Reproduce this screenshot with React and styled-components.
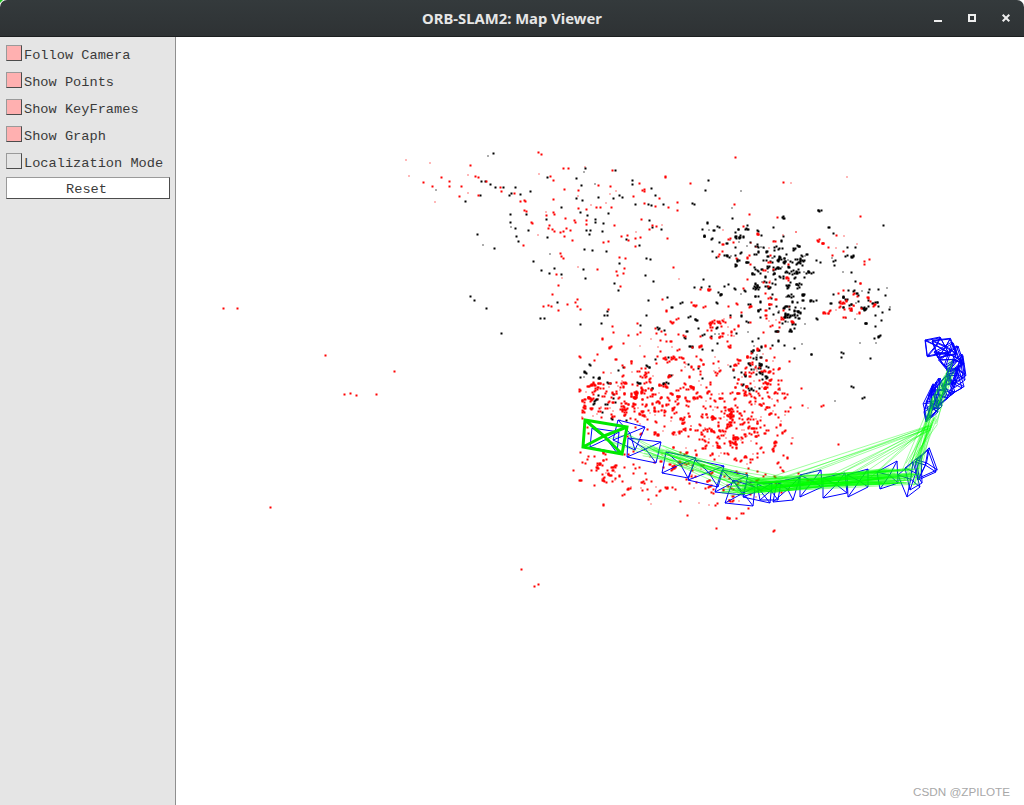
import React from "react";
import styled, { createGlobalStyle } from "styled-components";

const Global = createGlobalStyle`
  html, body { margin: 0; padding: 0; background: #fff; }
  #root { width: 1024px; height: 805px; overflow: hidden; }
`;

const Window = styled.div`
  position: relative;
  width: 1024px;
  height: 805px;
  display: flex;
  flex-direction: column;
  background: #fff;
  &::before {
    content: "";
    position: absolute;
    left: 0;
    top: 0;
    border-top: 3px solid #22c522;
    border-right: 3px solid transparent;
  }
`;

const TitleBar = styled.header`
  position: relative;
  z-index: 1;
  flex: 0 0 37px;
  box-sizing: border-box;
  display: flex;
  align-items: center;
  justify-content: center;
  background: linear-gradient(#343a3c, #2e3234);
  border-bottom: 1px solid #1c1f20;
  border-radius: 7px 7px 0 0;
`;

const Title = styled.h1`
  margin: 0;
  font: 700 14.8px "Noto Sans", "Open Sans", sans-serif;
  color: #e6e6e6;
`;

const WindowButtons = styled.div`
  position: absolute;
  right: 9px;
  top: 10px;
  display: flex;
  gap: 17px;
`;

const WinIcon = styled.svg`
  display: block;
  width: 17px;
  height: 17px;
  fill: none;
  stroke: #eeeeee;
  stroke-width: 2;
`;

const Body = styled.main`
  flex: 1;
  display: flex;
  min-height: 0;
`;

const Panel = styled.aside`
  flex: 0 0 176px;
  box-sizing: border-box;
  padding: 8px 5px 0 6px;
  background: #e5e5e5;
  border-right: 1px solid #8f8f8f;
  font: 13.65px "Liberation Mono", monospace;
  color: #3a3a3a;
`;

const Row = styled.label`
  display: flex;
  align-items: flex-start;
  gap: 2px;
  height: 24px;
  margin-bottom: 3px;
  line-height: 21px;
  white-space: nowrap;
  &:nth-child(5) { margin-bottom: 0; }
`;

const Box = styled.span`
  flex: 0 0 16px;
  box-sizing: border-box;
  height: 16px;
  background: ${(p) => (p.$on ? "#ffb0b0" : "#e5e5e5")};
  border: 1px solid #858585;
  border-top-color: #9a9a9a;
  border-left-color: #9a9a9a;
  border-bottom-color: #4c4c4c;
  border-right-color: #4c4c4c;
`;

const ResetButton = styled.div`
  box-sizing: border-box;
  width: 164px;
  height: 22px;
  padding-right: 3px;
  background: #fff;
  border: 1px solid #9a9a9a;
  border-bottom-color: #4c4c4c;
  border-right-color: #4c4c4c;
  line-height: 23px;
  text-align: center;
`;

const MapCanvas = styled.svg`
  flex: 1;
  display: block;
  width: 848px;
  height: 768px;
`;

const Watermark = styled.div`
  position: absolute;
  right: 14px;
  bottom: 7px;
  font: 11.7px "Liberation Sans", Arial, sans-serif;
  color: #a8a8a8;
`;

const rows = [
  ["Follow Camera", true],
  ["Show Points", true],
  ["Show KeyFrames", true],
  ["Show Graph", true],
  ["Localization Mode", false],
];

const seed = (s) => () => {
  s |= 0; s = (s + 0x6d2b79f5) | 0;
  let t = Math.imul(s ^ (s >>> 15), 1 | s);
  t = (t + Math.imul(t ^ (t >>> 7), 61 | t)) ^ t;
  return ((t ^ (t >>> 14)) >>> 0) / 4294967296;
};

const z = (o, v) => o + Math.floor(v / 3);
const pairs = (ox, oy, s) => s.trim().split(/\s+/).map((p) => {
  const [a, b] = p.split(",").map(Number);
  return [z(ox, a), z(oy, b)];
});

const paleZ = pairs(380, 140, "75,58 148,67 85,107 262,102 262,156 162,184 476,101 612,80 592,167 688,159 706,151 631,192 676,187 496,215 472,282 766,273 844,252 592,380 545,411 896,414");
const grayZ = pairs(380, 140, "322,46 166,148 392,260 307,314 508,341 643,130 610,93");
const redZ = pairs(380, 140, "475,37 485,43 271,76 184,113 130,127 157,139 209,124 209,139 244,139 238,169 286,109 295,113 319,125 362,142 364,155 296,167 403,161 420,183 432,181 437,183 511,109 520,120 550,85 565,85 553,148 520,178 595,151 656,136 691,139 698,91 778,130 793,148 760,169 793,189 826,199 838,175 892,187 865,202 892,211 433,211 439,214 500,226 519,217 523,223 556,235 583,241 586,247 620,241 620,253 453,246 456,249 508,256 505,265 517,268 523,274 540,277 550,274 559,265 570,271 553,289 577,301 595,205 618,207 649,202 661,202 694,202 703,256 670,306 685,304 724,290 742,286 745,301 767,295 781,292 766,319 861,295 808,268 817,256 829,259 784,238 431,317 541,340 544,350 549,356 717,352 736,355 880,382 732,384 730,400 708,393 711,405 651,389 528,402 536,436 518,463 720,438 847,478 563,492 491,498 505,495 514,499 592,478 587,488 593,499 600,508 535,511 684,507 698,560 700,577 772,583 781,577 829,580 844,574 856,583 826,565 895,535 773,549");
const blackZ = pairs(380, 140, "340,40 305,125 316,125 331,133 347,142 370,142 406,142 393,159 387,166 421,163 451,154 256,184 300,165 391,223 391,247 406,265 445,271 292,283 409,290 415,304 343,325 460,364 484,391 523,385 508,400 544,403 610,388 616,415 502,292 500,237 439,223 545,202 502,112 589,115 604,136 616,85 589,175 607,181 601,217 622,226 646,238 646,247 670,250 619,271 632,271 628,283 667,274 613,328 637,331 679,334 718,370 703,430 715,451 796,406 820,423 805,480 799,526 271,468 283,481 319,505 365,579 532,486 481,535 493,535 601,553 664,549 673,525 682,525 682,513 780,555 835,568 853,571 808,241 817,262 843,268 739,298 778,316 800,355 810,358 706,91 757,121 757,132 814,145 826,166 850,193 814,196 805,193 766,193 727,171 718,166 700,175 685,220 655,172");
const outliers = [[223,308],[237,308],[325,355],[394,371],[344,394],[350,393],[356,395],[376,394],[270,507],[521,569],[534,586],[538,584],[716,528],[582,462],[573,470]];

const blackClusters = [
  [772,268,20,14,70],[788,272,12,12,35],[790,312,11,10,40],[730,238,16,11,40],[866,304,16,10,40],
  [755,378,9,12,28],[718,328,22,26,30],[760,300,40,35,30],[820,350,25,25,12],[860,345,15,20,10],
  [640,372,40,15,18],[600,395,15,15,14],[750,355,15,10,14],[815,228,30,15,10],[745,190,40,15,6],
  [850,262,15,8,8],
];
const redClusters = [
  [755,380,12,16,70],[725,325,9,7,25],[775,316,10,8,14],[845,307,13,7,22],[870,300,15,15,10],
  [725,405,40,26,100],[612,393,22,14,85],[640,408,20,13,60],[730,428,18,13,100],[680,400,36,26,90],
  [598,470,16,8,25],[625,478,26,17,38],[700,480,22,15,26],[690,462,28,20,22],[745,478,30,20,45],
  [762,440,30,25,38],[782,400,20,22,20],[690,350,28,25,38],[650,355,26,14,30],[790,240,50,25,20],
  [835,245,30,15,10],[745,265,28,30,30],[775,185,60,30,7],[590,398,8,18,18],
];

function buildClusterPoints() {
  const r = seed(4242);
  const g = () => (r() + r() + r() + r() - 2) * 1.7;
  const out = [];
  const run = (list, colour) => list.forEach(([cx, cy, sx, sy, n]) => {
    for (let i = 0; i < n; i++) {
      const x = Math.round(cx + g() * sx);
      const y = Math.round(cy + g() * sy);
      if (y > 530 || x > 890 || x < 560) continue;
      if (y < 425 && x < 578) continue;
      const pale = r() < 0.15;
      out.push([x, y, colour, pale]);
      if (!pale && r() < 0.4) {
        const k = r() < 0.35 ? 3 : 1;
        for (let j = 1; j <= k; j++) {
          out.push([x + Math.floor(r() * 4) - 1, y + Math.floor(r() * 3) - 1, colour, false]);
        }
      }
    }
  });
  run(blackClusters, "#000");
  run(redClusters, "#f00");
  return out;
}

const allPoints = [
  ...paleZ.map(([x, y]) => [x, y, "#f00", true]),
  ...grayZ.map(([x, y]) => [x, y, "#000", true]),
  ...blackZ.map(([x, y]) => [x, y, "#000", false]),
  ...redZ.map(([x, y]) => [x, y, "#f00", false]),
  ...outliers.map(([x, y]) => [x, y, "#f00", false]),
  ...buildClusterPoints(),
];

const Q = (a, b, c, d, e, f, g, h) => [[a, b], [c, d], [e, f], [g, h]];
const lowerFrames = [
  Q(592,428,619,432,617,453,590,447),
  Q(618,420,645,427,635,450,613,440),
  Q(628,438,661,442,656,463,627,457),
  Q(666,452,696,458,688,478,662,473),
  Q(695,460,724,466,718,487,688,480),
  Q(722,470,748,475,743,495,715,492),
  Q(733,480,755,487,753,506,725,503),
  Q(747,482,772,483,770,503,743,497),
  Q(757,484,781,482,778,500,760,500),
  Q(777,482,800,477,793,500,773,502),
  Q(800,475,821,470,822,487,800,497),
  Q(823,478,845,473,847,493,823,498),
  Q(847,475,868,469,868,487,848,497),
  Q(877,472,897,461,898,483,880,489),
  Q(898,475,913,462,920,487,907,497),
  Q(905,468,921,455,922,483,910,490),
];
const upperSeeds = [
  Q(915,462,928,450,936,472,918,480),
  Q(924,412,932,388,938,412,926,422),
  Q(926,402,936,382,942,406,930,418),
  Q(930,395,940,378,948,398,934,410),
  Q(934,390,948,374,955,392,940,404),
  Q(942,386,956,368,962,388,948,396),
  Q(948,376,962,360,965,380,954,388),
  Q(946,368,962,354,965,374,952,382),
  Q(940,360,958,346,964,364,950,372),
  Q(934,352,952,342,958,358,944,366),
  Q(925,340,940,337,948,352,927,356),
  Q(932,341,950,339,956,354,938,358),
];

function buildUpper() {
  const r = seed(17);
  const out = [];
  upperSeeds.forEach((q) => {
    out.push(q);
    const dx = (r() - 0.5) * 7, dy = (r() - 0.5) * 7;
    out.push(q.map(([x, y]) => [x + dx, y + dy]));
  });
  return out;
}
const upperFrames = buildUpper();

const centre = (q) => [
  (q[0][0] + q[1][0] + q[2][0] + q[3][0]) / 4,
  (q[0][1] + q[1][1] + q[2][1] + q[3][1]) / 4,
];

function buildEdges() {
  const r = seed(99);
  const e = [];
  const cs = lowerFrames.map(centre);
  for (let i = 0; i < cs.length; i++) {
    for (let k = 1; k <= 3; k++) {
      if (!cs[i + k]) continue;
      e.push([cs[i][0], cs[i][1], cs[i + k][0], cs[i + k][1]]);
    }
  }
  for (let i = 0; i < 70; i++) {
    e.push([720 + r() * 50, 478 + r() * 18, 880 + r() * 40, 468 + r() * 17]);
  }
  for (let i = 0; i < 13; i++) {
    e.push([925 + r() * 8, 422 + r() * 8, 760 + r() * 120, 476 + r() * 8]);
  }
  for (let i = 0; i < 22; i++) {
    e.push([930 + r() * 8, 395 + r() * 30, 902 + r() * 18, 462 + r() * 24]);
  }
  for (let i = 0; i < 18; i++) {
    e.push([944 + r() * 12, 358 + r() * 24, 930 + r() * 10, 395 + r() * 30]);
  }
  for (let i = 0; i < 18; i++) {
    e.push([640 + r() * 30, 444 + r() * 14, 740 + r() * 40, 478 + r() * 14]);
  }
  e.push([647, 447, 783, 477]);
  return e;
}
const edges = buildEdges();

const PointsLayer = () => (
  <g>
    {allPoints.map(([x, y, c, pale], i) =>
      pale ? (
        <rect key={i} x={x} y={y} width={2} height={2} fill={c} fillOpacity={c === "#000" ? 0.32 : 0.28} />
      ) : (
        <rect key={i} x={x - 0.5} y={y - 0.5} width={2} height={2} fill={c} />
      )
    )}
  </g>
);

const Frame = ({ q }) => {
  const [cx, cy] = centre(q);
  const ax = cx + (q[1][0] - q[0][0]) * 0.08;
  const ay = cy - 1;
  const d = `M${q.map((p) => p.join(",")).join("L")}Z` +
    q.map((p) => `M${ax},${ay}L${p[0]},${p[1]}`).join("");
  return <path d={d} fill="none" stroke="#0000ff" strokeWidth="1" />;
};

export default function App() {
  return (
    <Window>
      <Global />
      <TitleBar>
        <Title>ORB-SLAM2: Map Viewer</Title>
        <WindowButtons>
          <WinIcon viewBox="0 0 17 17"><path d="M4 11H12" /></WinIcon>
          <WinIcon viewBox="0 0 17 17"><path d="M5 5h6v6H5z" /></WinIcon>
          <WinIcon viewBox="0 0 17 17"><path d="M4.7 4.7l6.6 6.6M11.3 4.7l-6.6 6.6" /></WinIcon>
        </WindowButtons>
      </TitleBar>
      <Body>
        <Panel>
          {rows.map(([label, on]) => (
            <Row key={label}>
              <Box $on={on} />
              {label}
            </Row>
          ))}
          <ResetButton>Reset</ResetButton>
        </Panel>
        <MapCanvas viewBox="176 37 848 768">
          <PointsLayer />
          {lowerFrames.map((q, i) => <Frame key={i} q={q} />)}
          {upperFrames.map((q, i) => <Frame key={i} q={q} />)}
          <g stroke="#00ff00" strokeOpacity="0.42" strokeWidth="0.9">
            {edges.map(([a, b, c, d], i) => <line key={i} x1={a} y1={b} x2={c} y2={d} />)}
          </g>
          <path d="M585 420L627 427L622 454L583 447ZM604 436L585 420M604 436L627 427M604 436L622 454M604 436L583 447" fill="none" stroke="#00e800" strokeWidth="3" />
        </MapCanvas>
      </Body>
      <Watermark>CSDN @ZPILOTE</Watermark>
    </Window>
  );
}
